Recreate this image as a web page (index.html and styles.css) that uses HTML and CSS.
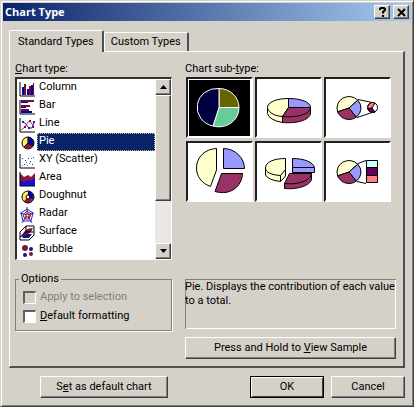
FILE: index.html
```
<!DOCTYPE html>
<html lang="en">
<head>
  <meta charset="UTF-8">
  <meta name="viewport" content="width=device-width, initial-scale=1.0">
  <title>Chart Type</title>
  <link rel="stylesheet" href="styles.css">
</head>
<body>

  <form class="dialog">
    <header class="title-bar">
      <h1>Chart Type</h1>
      <button type="button" class="title-button" aria-label="Help">
        <svg width="11" height="10" viewBox="0 0 11 10"><path d="M3 3V2L4 1H7L8 2V3L6 5V6.500" fill="none" stroke="#000" stroke-width="2"/><path d="M5 8h2v2H5z"/></svg>
      </button>
      <button type="button" class="title-button" aria-label="Close">
        <svg width="11" height="10" viewBox="0 0 11 10"><path d="M2 2l7 7M9 2L2 9" fill="none" stroke="#000" stroke-width="2"/></svg>
      </button>
    </header>

    <div class="content">
      <div class="tabs" role="tablist">
        <button type="button" class="tab active" role="tab" aria-selected="true">Standard Types</button>
        <button type="button" class="tab" role="tab" aria-selected="false">Custom Types</button>
      </div>

      <div class="panel" role="tabpanel">
        <!-- Chart types -->
        <div class="types" role="radiogroup" aria-labelledby="typeLabel">
          <div class="caption" id="typeLabel"><u>C</u>hart type:</div>
          <div class="list-box">
            <div class="list">
              <label class="item"><input type="radio" name="type">
                <svg viewBox="0 0 16 16"><path d="M1 1v14h15" class="axis"/><path d="M3 6h2v8H3zM8 8h2v6H8zM12 4h2v10h-2z" fill="#00a"/><path d="M5 3h2v11H5zM10 5h2v9h-2zM14 2h1v12h-1z" fill="#701030"/></svg>
                <span>Column</span></label>
              <label class="item"><input type="radio" name="type">
                <svg viewBox="0 0 16 16"><path d="M1 1v14h15" class="axis"/><path d="M2 3h7v1H2zM2 8h5v1H2zM2 12h11v2H2z" fill="#00a"/><path d="M2 1h13v2H2zM2 6h9v2H2zM2 10h8v2H2z" fill="#701030"/></svg>
                <span>Bar</span></label>
              <label class="item"><input type="radio" name="type">
                <svg viewBox="0 0 16 16"><path d="M1 1v14h15" class="axis"/><path d="M2 13l4-3 3-5 2-1 2 3 2 3" fill="none" stroke="#d34"/><path d="M3 5l3 1 4 5h3l2-6" fill="none" stroke="#22c"/><path d="M5 9h2v2H5zM10 3h2v2h-2zM13 9h2v2h-2z" fill="#904"/><path d="M3 4h2v2H3zM9 10h2v2H9zM14 4h2v2h-2z" fill="#22a"/></svg>
                <span>Line</span></label>
              <label class="item"><input type="radio" name="type" checked>
                <svg viewBox="0 0 16 16"><circle cx="9" cy="8" r="6" fill="#fe5"/><path d="M9 8V2a6 6 0 0 1 5 9z" fill="#00a"/><path d="M9 8l5 3a6 6 0 0 1-9 1z" fill="#901540"/><path d="M9 8V2M9 8l5 3M9 8l-4 4" class="edge"/><circle cx="9" cy="8" r="6" class="edge"/></svg>
                <span>Pie</span></label>
              <label class="item"><input type="radio" name="type">
                <svg viewBox="0 0 16 16"><path d="M1 1v14h15" class="axis"/><path d="M3 5h1v1H3zM6 7h1v1H6zM5 11h1v1H5zM9 5h1v1H9zM11 8h1v1h-1zM14 4h1v1h-1zM13 11h1v1h-1z" fill="#22c"/><path d="M3 12h1v1H3zM7 9h1v1H7zM8 12h1v1H8zM10 10h1v1h-1zM12 5h1v1h-1z" fill="#67a"/></svg>
                <span>XY (Scatter)</span></label>
              <label class="item"><input type="radio" name="type">
                <svg viewBox="0 0 16 16"><path d="M1 2l4 4 4-2 3 2 4-4v12H1z" fill="#901540"/><path d="M1 9l4 2 4-2 3 1 4-3v8H1z" fill="#11d"/><path d="M1 1v14h15" class="axis"/></svg>
                <span>Area</span></label>
              <label class="item"><input type="radio" name="type">
                <svg viewBox="0 0 16 16"><circle cx="9" cy="8" r="4" fill="none" stroke="#fe5" stroke-width="4"/><path d="M9 4a4 4 0 0 1 3 6" fill="none" stroke="#00a" stroke-width="4"/><path d="M12 10a4 4 0 0 1-6 1" fill="none" stroke="#901540" stroke-width="4"/><circle cx="9" cy="8" r="6" class="edge"/><circle cx="9" cy="8" r="2" class="edge"/></svg>
                <span>Doughnut</span></label>
              <label class="item"><input type="radio" name="type">
                <svg viewBox="0 0 16 16"><path d="M8 2l6 4-2 8H4L2 6zM8 0v8L1 6M8 8l7-2M8 8l5 8M8 8l-5 8" fill="none" stroke="#22d"/><path d="M8 4l4 3-2 5H6L4 8z" fill="none" stroke="#912"/><path d="M7 7h3v3H7z" fill="#fff" stroke="#700"/></svg>
                <span>Radar</span></label>
              <label class="item"><input type="radio" name="type">
                <svg viewBox="0 0 16 16"><path d="M1 7l6-6h8v9l-5 5H1z" fill="#fff"/><path d="M2 12c3-6 6-9 12-9l-2 4-6 4z" fill="#801535"/><path d="M3 12l4-3h6l-3 4H4z" fill="#118"/><path d="M1 7l6-6h8v9l-5 5H1zM1 12l6-5h8M7 1v6" class="edge"/></svg>
                <span>Surface</span></label>
              <label class="item"><input type="radio" name="type">
                <svg viewBox="0 0 16 16"><circle cx="6" cy="5" r="3" fill="#801535"/><circle cx="12" cy="6" r="2" fill="#118"/><circle cx="6" cy="12" r="2" fill="#118"/><circle cx="12" cy="11" r="2" fill="#801535"/></svg>
                <span>Bubble</span></label>
            </div>
            <div class="scrollbar">
              <button type="button" class="scroll-button" aria-label="Scroll up"><svg width="7" height="4" viewBox="0 0 7 4"><path d="M0 4l3.500-4L7 4z"/></svg></button>
              <div class="thumb"></div>
              <button type="button" class="scroll-button down" aria-label="Scroll down"><svg width="7" height="4" viewBox="0 0 7 4"><path d="M0 0l3.500 4L7 0z"/></svg></button>
            </div>
          </div>
        </div>

        <!-- Sub-types -->
        <div class="subtypes" role="radiogroup" aria-labelledby="subtypeLabel">
          <div class="caption" id="subtypeLabel">Chart sub-<u>t</u>ype:</div>
          <div class="gallery">
            <label class="cell"><input type="radio" name="subtype" aria-label="Pie" checked>
              <svg viewBox="0 0 63 57">
                <rect x="0" y="0" width="63" height="57" fill="#fff"/>
                <rect x="1" y="1" width="61" height="56" fill="#000"/>
                <g stroke="#fff">
                  <path d="M31 28.500V9.500A20 19 0 0 1 51 28.500z" fill="#666600"/>
                  <path d="M31 28.500H51A20 19 0 0 1 25 47z" fill="#66cc99"/>
                  <path d="M31 28.500L25 47A20 19 0 0 1 31 9.500z" fill="#000040"/>
                </g>
              </svg></label>
            <label class="cell"><input type="radio" name="subtype" aria-label="Pie with a 3-D visual effect">
              <svg viewBox="0 0 63 57" class="drawing">
                <path d="M10.500 28.500v6Q12 41 25.500 43.500v-6z" class="cream"/>
                <path d="M25.500 37.500v6C42 45 53.500 40 53.500 34v-5.500z" class="plum"/>
                <path d="M31.500 28.500L25.500 37.500C16 37 10.500 32 10.500 28.500C10.500 23 20 19.500 31.500 19.500z" class="cream"/>
                <path d="M31.500 28.500v-9C44 19.500 53.500 23 53.500 28.500z" class="blue"/>
                <path d="M31.500 28.500h22C53.500 35 40 39 25.500 37.500z" class="plum"/>
              </svg></label>
            <label class="cell"><input type="radio" name="subtype" aria-label="Pie of pie">
              <svg viewBox="0 0 63 57" class="drawing">
                <path d="M32 20.500L46 23.500M31 38.500L46 33.500"/>
                <path d="M23 29L11.700 32.900A12 11.500 0 0 1 31.800 21.200z" class="cream"/>
                <path d="M23 29L31.800 21.200A12 11.500 0 0 1 30.200 38.200z" class="blue"/>
                <path d="M23 29L30.200 38.200A12 11.500 0 0 1 11.700 32.900z" class="plum"/>
                <circle cx="46.500" cy="28.500" r="5" fill="#fff"/>
                <path d="M46 29L42 30A5 5 0 0 1 49 24z" fill="#ff8080"/>
                <path d="M46 29l3 4A5 5 0 0 1 42 30z" fill="#660066"/>
              </svg></label>
            <label class="cell"><input type="radio" name="subtype" aria-label="Exploded pie">
              <svg viewBox="0 0 63 57" class="drawing">
                <path d="M28.500 5.500V27L22.500 43.500C13 40 8.500 33 8.500 25C8.500 14 17 6 28.500 5.500z" class="cream"/>
                <path d="M35.500 25.500v-20C47 5.500 56.500 15 56.500 25.500z" class="blue"/>
                <path d="M33.500 30.500H54.500C54 43 43 53 27 48.500z" class="plum"/>
              </svg></label>
            <label class="cell"><input type="radio" name="subtype" aria-label="Exploded pie with a 3-D visual effect">
              <svg viewBox="0 0 63 57" class="drawing">
                <path d="M8.500 26v6Q11 37 23.500 38.500L28.500 33v-7z" class="cream"/>
                <path d="M28.500 15.500v11L23.500 32.500C14 32 8.500 29 8.500 25C8.500 19 17 15.500 28.500 15.500zM23.500 32.500v6" class="cream"/>
                <path d="M35.500 24.500v-9C47 15.500 56 19 57.500 24.500z" class="blue"/>
                <path d="M35.500 24.500h22v5h-22z" class="blue"/>
                <path d="M27.500 40.500v5C43 47 54.500 41 54.500 36v-5.500z" class="plum"/>
                <path d="M32.500 30.500h22C54 38 40 42 27.500 40.500z" class="plum"/>
              </svg></label>
            <label class="cell"><input type="radio" name="subtype" aria-label="Bar of pie">
              <svg viewBox="0 0 63 57" class="drawing">
                <path d="M32 20.500L40 17.500M31 38.500L40 40.500"/>
                <path d="M23 29L11.700 32.900A12 11.500 0 0 1 31.800 21.200z" class="cream"/>
                <path d="M23 29L31.800 21.200A12 11.500 0 0 1 30.200 38.200z" class="blue"/>
                <path d="M23 29L30.200 38.200A12 11.500 0 0 1 11.700 32.900z" class="plum"/>
                <path d="M40.500 17.500h11v7h-11z" fill="#ccffff"/>
                <path d="M40.500 24.500h11v8h-11z" fill="#660066"/>
                <path d="M40.500 32.500h11v7h-11z" fill="#ff8080"/>
              </svg></label>
          </div>
        </div>

        <fieldset class="options">
          <legend>Options</legend>
          <label class="check disabled"><input type="checkbox" disabled><span>Apply to selection</span></label>
          <label class="check"><input type="checkbox"><span><u>D</u>efault formatting</span></label>
        </fieldset>

        <div class="details">
          <p class="description">Pie. Displays the contribution of each value to a total.</p>
          <button type="button" class="button">Press and Hold to <u>V</u>iew Sample</button>
        </div>
      </div>

      <footer class="actions">
        <button type="button" class="button set-default">S<u>e</u>t as default chart</button>
        <button type="submit" class="button primary">OK</button>
        <button type="button" class="button">Cancel</button>
      </footer>
    </div>
  </form>

</body>
</html>
```

FILE: styles.css
```
* {
  box-sizing: border-box;
}

body {
  margin: 0;
  background: #d5d1c9;
  color: #000;
  font-family: Roboto, "Open Sans", sans-serif;
  font-size: 11px;
  line-height: 14px;
}

button {
  font: inherit;
  color: inherit;
  padding: 0;
  margin: 0;
}

u {
  text-decoration: underline;
  text-underline-offset: 1px;
}

.dialog {
  padding: 1px;
  border: 1px solid;
  border-color: #d5d1c9 #404040 #404040 #d5d1c9;
  box-shadow: inset 1px 1px #fff, inset -1px -1px #808080;
  background: #d5d1c9;
}

/* Title bar */
.title-bar {
  display: flex;
  align-items: center;
  gap: 3px;
  height: 18px;
  margin: 1px;
  padding: 0 2px;
  background: linear-gradient(to right, #0a246a, #a6caf0);
}

.title-bar h1 {
  flex: 1;
  margin: 0;
  color: #fff;
  font-family: "Open Sans", "Noto Sans", sans-serif;
  font-size: 11px;
  font-weight: bold;
}

.title-button,
.scroll-button,
.thumb {
  display: flex;
  align-items: center;
  justify-content: center;
  width: 16px;
  height: 14px;
  background: #d5d1c9;
  border: 1px solid;
  border-color: #fff #404040 #404040 #fff;
  box-shadow: inset -1px -1px #808080;
}

.content {
  padding: 8px 7px 7px;
}

/* Tabs */
.tabs {
  display: flex;
  align-items: flex-end;
}

.tab {
  height: 19px;
  padding: 0 6px;
  background: #d5d1c9;
  border: solid;
  border-width: 1px 2px 0 1px;
  border-color: #fff #505050 #fff #fff;
  border-radius: 2px 2px 0 0;
}

.tab.active {
  position: relative;
  height: 22px;
  margin-bottom: -1px;
  padding: 0 8px;
}

.panel {
  display: grid;
  grid-template-columns: 157px 1fr;
  gap: 19px 13px;
  padding: 10px 7px 7px 5px;
  border: solid;
  border-width: 1px 2px 2px 1px;
  border-color: #fff #505050 #505050 #fff;
}

.caption {
  margin-bottom: 1px;
}

/* Chart type list */
.list-box {
  display: flex;
  border: solid;
  border-width: 2px 1px 1px 2px;
  border-color: #303030 #fff #fff #303030;
  background: #fff;
}

.list {
  flex: 1;
}

.item {
  display: flex;
  height: 18px;
}

.item input,
.cell input {
  position: absolute;
  opacity: 0;
}

.item svg {
  width: 16px;
  height: 16px;
  margin: 2px 2px 0;
}

.item span {
  flex: 1;
  padding: 0 1px;
  border: 1px solid transparent;
  line-height: 13px;
}

.item input:checked ~ span {
  color: #fff;
  background: #0a246a;
  border: 1px dotted #c8b878;
}

.axis,
.edge {
  fill: none;
  stroke: #000;
}

.scrollbar {
  display: flex;
  flex-direction: column;
  width: 16px;
  background: #ebe8e4;
}

.scroll-button {
  height: 16px;
}

.scroll-button.down {
  margin-top: auto;
}

.thumb {
  height: 106px;
}

/* Sub-type gallery */
.gallery {
  display: grid;
  grid-template-columns: repeat(3, 67px);
  gap: 3px 2px;
  padding-left: 1px;
}

.cell {
  height: 61px;
  border: 2px solid;
  border-color: #202020 #fff #fff #202020;
  background: #fff;
}

.cell svg {
  display: block;
  width: 63px;
  height: 57px;
}

.drawing {
  fill: none;
  stroke: #000;
}

.cream {
  fill: #ffffcc;
}

.blue {
  fill: #9999ff;
}

.plum {
  fill: #993366;
}

/* Options */
.options {
  display: flex;
  flex-direction: column;
  gap: 5px;
  margin: -7px 0 auto;
  padding: 4px 7px 7px;
  border: 1px solid #808080;
  box-shadow: 1px 1px #fff;
}

.options legend {
  margin-left: -4px;
  padding: 0 2px;
}

.check {
  display: flex;
  align-items: center;
  gap: 4px;
}

.check input {
  appearance: none;
  width: 13px;
  height: 13px;
  margin: 0;
  background: #fff;
  border: solid;
  border-width: 2px 1px 1px 2px;
  border-color: #606060 #fff #fff #606060;
}

.check input:checked {
  background: #000;
}

.disabled {
  color: #808080;
}

.disabled input {
  background: #d5d1c9;
}

.description {
  height: 50px;
  margin: 0 0 8px;
  padding-top: 1px;
  box-shadow: inset 1px 1px #808080, inset -1px -1px #fff;
}

/* Buttons */
.button {
  width: 100%;
  height: 22px;
  background: #d5d1c9;
  border: 1px solid;
  border-color: #fff #404040 #404040 #fff;
  box-shadow: inset -1px -1px #808080;
}

.actions {
  display: flex;
  gap: 7px;
  padding-top: 8px;
}

.actions .button {
  width: 74px;
}

.actions .set-default {
  width: 128px;
  margin-left: 31px;
  margin-right: auto;
}

.actions .primary {
  border-color: #000;
  box-shadow: inset 1px 1px #fff, inset -1px -1px #404040;
}
```
